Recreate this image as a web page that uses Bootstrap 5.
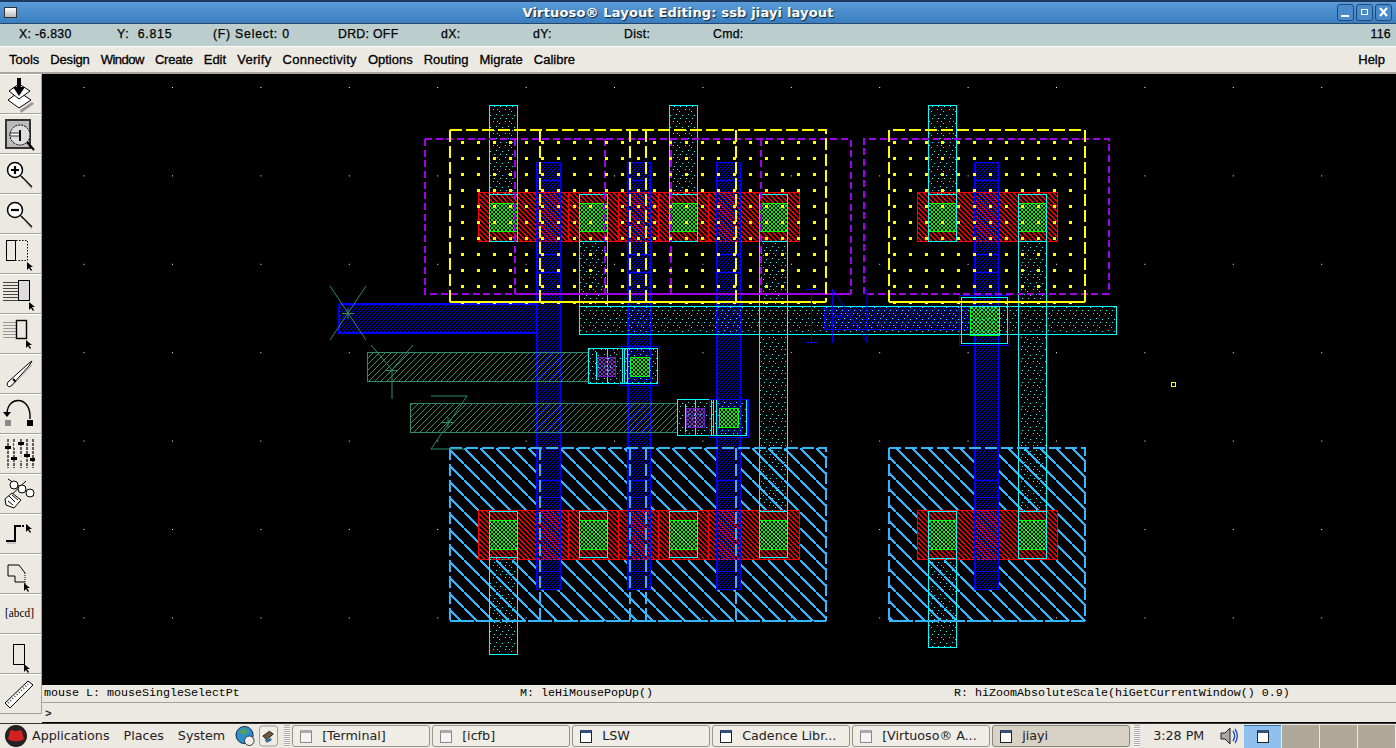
<!DOCTYPE html>
<html lang="en"><head><meta charset="utf-8"><title>Virtuoso Layout Editing</title>
<link href="https://cdn.jsdelivr.net/npm/bootstrap@5.3.0/dist/css/bootstrap.min.css" rel="stylesheet">
<style>
html,body{height:748px;overflow:hidden;background:#ece9e2;margin:0}
.app-win{height:748px}
.titlebar{height:24px;background:linear-gradient(#5a9ad8,#3b7ebf);border-top:2px solid #1c3a5e;border-bottom:1px solid #25496f;color:#fff;font:700 13px/20px "DejaVu Sans",sans-serif;text-shadow:1px 1px 1px #123;letter-spacing:.15px;padding:0 4px}
.titlebar .ttl{left:0;right:40px;text-align:center}
.win-ico{width:13px;height:11px;background:linear-gradient(#fff,#bbb);border:1px solid #333}
.win-btns{gap:2px}
.win-btn{width:17px;height:17px;border:1px solid #1f4a78;border-radius:3px;background:#4a8ccb}
.infobar{height:22px;background:#bccdcd;display:grid;grid-template-columns:98px 96px 125px 103px 92px 91px 89px 1fr auto;padding:0 5px 0 19px;font:12.3px/21px "Liberation Sans",sans-serif;color:#000;-webkit-text-stroke:.25px #000;letter-spacing:.3px}
.wide-sp{letter-spacing:.75px}
.menubar{height:28px;background:#ece9e2;border-top:1px solid #fff;border-bottom:2px solid #aaa69e;padding:0 11px 0 9px;font:13px/25px "Liberation Sans",sans-serif;color:#000;-webkit-text-stroke:.3px #000;gap:11px}
.tight-a{letter-spacing:-.2px}.tight-b{letter-spacing:-.5px}.loose-a{letter-spacing:.3px}
.main-row{height:649px}
.toolcol{width:42px;flex:none}
.toolbtn{height:40px;width:42px;background:#ece9e2;border-top:1px solid #fff;border-bottom:1px solid #a5a29a;border-right:1px solid #a5a29a}
.toolbtn svg{display:block}
.toolbtn text{font:12px "Liberation Serif",serif;fill:#000}
.canvas-wrap{height:611px;background:#000}
.canvas-wrap svg{display:block}
.statusln{height:18px;font:11.67px/17px "Liberation Mono",monospace;color:#000;border-bottom:1px solid #a5a29a;padding-left:2px;background:#ece9e2;white-space:pre}
.stat-a{width:476px}.stat-b{width:434px}
.promptln{height:20px;font:700 11px/22px "Liberation Mono",monospace;padding-left:3px;background:#ece9e2;border-bottom:1px solid #000}
.taskbar{height:25px;background:#ece9e2;border-top:1px solid #333;font:12.7px/24px "DejaVu Sans",sans-serif;color:#222;white-space:nowrap}
.mnu-gap{margin-left:14px}
.ico-globe{margin-left:10px}
.ico-tool{margin-left:3px}
.grip{width:6px;height:22px;flex:none;background:repeating-linear-gradient(#aaa 0 1px,#f8f8f8 1px 2px)}
.grip-a{margin:0 2px 0 6px}
.grip-b{margin-left:2px}
.taskbtn{width:138px;height:22px;border:1px solid #9a968c;border-radius:3px;background:#f0ede6;line-height:20px;padding-left:7px;gap:10px;overflow:hidden;margin-right:2px;flex:none}
.taskbtn.actv{background:#d8d1c6;border-color:#8a857b}
.winglyph{width:12px;height:13px;border:1px solid #222;background:#fff;border-top:3px solid #33507a;flex:none}
.winglyph.dim{border-color:#888;border-top-color:#aaa;background:#f4f4f4}
.clock-t{margin-left:13px;flex:none}
.ico-spk{margin-left:15px;flex:none}
.wsps{margin-left:5px;flex:none}
.wsp{width:37px;height:23px;background:#b0a898;margin-right:1px;flex:none}
.wsp.on{background:#8fc1ef;border-top:1px solid #3a70a8}
</style></head>
<body>
<div class="app-win d-flex flex-column">
<div class="titlebar position-relative d-flex align-items-center justify-content-between">
 <span class="win-ico"></span>
 <span class="ttl position-absolute">Virtuoso® Layout Editing: ssb jiayi layout</span>
 <span class="d-flex win-btns">
  <svg class="win-btn" viewBox="0 0 15 15"><rect x="3" y="10" width="8" height="2" fill="#fff"/></svg>
  <svg class="win-btn" viewBox="0 0 15 15"><rect x="4.500" y="4.500" width="6" height="5" fill="none" stroke="#fff"/></svg>
  <svg class="win-btn" viewBox="0 0 15 15"><path d="M4 3l7 8M11 3l-7 8" stroke="#fff" stroke-width="2"/></svg>
 </span>
</div>
<div class="infobar"><span>X: -6.830</span><span class="wide-sp">Y:&nbsp; 6.815</span><span class="wide-sp">(F) Select: 0</span><span>DRD: OFF</span><span>dX:</span><span>dY:</span><span>Dist:</span><span>Cmd:</span><span>116</span></div>
<div class="menubar d-flex"><span>Tools</span><span class="tight-a">Design</span><span class="tight-b">Window</span><span class="tight-a">Create</span><span>Edit</span><span class="loose-a">Verify</span><span class="loose-a">Connectivity</span><span>Options</span><span>Routing</span><span>Migrate</span><span>Calibre</span><span class="ms-auto">Help</span></div>
<div class="main-row d-flex">
 <div class="toolcol">
  <div class="toolbtn"><svg width="40" height="38" viewBox="0 0 40 38"><path d="M20 35l12-8 2 2-13 9z" fill="#999"/><path d="M8 25l11-8 12 8-12 8z" fill="#fff" stroke="#000"/><path d="M9 16l10-7 11 7-11 8z" fill="#fff" stroke="#000"/><path d="M17 3h4v9h4l-6 9-6-9h4z" fill="#000"/></svg></div>
  <div class="toolbtn"><svg width="40" height="38" viewBox="0 0 40 38"><rect x="6" y="5" width="24" height="28" fill="#bbb" stroke="#333" stroke-width="2"/><circle cx="20" cy="20" r="10" fill="#ddd" stroke="#000" stroke-dasharray="2 1"/><path d="M10 18h10v3h-10z" fill="#fff" stroke="#333"/><path d="M20 15v11" stroke="#000" stroke-width="2"/><path d="M27 27l7 8" stroke="#000" stroke-width="2"/></svg></div>
  <div class="toolbtn"><svg width="40" height="38" viewBox="0 0 40 38"><circle cx="15" cy="15" r="7.500" fill="#fff" stroke="#000" stroke-width="1.500"/><path d="M11 15h8M15 11v8" stroke="#000" stroke-width="2.200"/><path d="M21 21l11 11" stroke="#000" stroke-width="1.500"/><path d="M23 24l9 10" stroke="#aaa"/></svg></div>
  <div class="toolbtn"><svg width="40" height="38" viewBox="0 0 40 38"><circle cx="15" cy="15" r="7.500" fill="#fff" stroke="#000" stroke-width="1.500"/><path d="M11 15h8" stroke="#000" stroke-width="2.200"/><path d="M21 21l11 11" stroke="#000" stroke-width="1.500"/><path d="M23 24l9 10" stroke="#aaa"/></svg></div>
  <div class="toolbtn"><svg width="40" height="38" viewBox="0 0 40 38"><path d="M16 5.500h11.500v20h-11" fill="none" stroke="#000" stroke-dasharray="1.500 1.500"/><rect x="6.500" y="5.500" width="9" height="20" fill="#ece9e2" stroke="#000"/><use href="#curs" x="27" y="27"/></svg></div>
  <div class="toolbtn"><svg width="40" height="38" viewBox="0 0 40 38"><path d="M3 7.500h15M3 10.500h15M3 13.500h15M3 16.500h15M3 19.500h15M3 22.500h15M3 25.500h15" stroke="#444"/><rect x="18.500" y="5.500" width="11" height="20" fill="#ddd" stroke="#000"/><use href="#curs" x="29" y="27"/></svg></div>
  <div class="toolbtn"><svg width="40" height="38" viewBox="0 0 40 38"><path d="M3 7.500h13M3 10.500h13M3 13.500h13M3 16.500h13M3 19.500h13M3 22.500h13" stroke="#999"/><rect x="16.500" y="5.500" width="10" height="18" fill="#ece9e2" stroke="#000" stroke-width="1.400"/><use href="#curs" x="26" y="25"/></svg></div>
  <div class="toolbtn"><svg width="40" height="38" viewBox="0 0 40 38"><path d="M8 27L28 9l4-3-3 5-18 20c-3 2-5-1-3-4z" fill="#fff" stroke="#000"/><path d="M13 24l3 3" stroke="#000" stroke-width="2"/><path d="M12 31l20-21" stroke="#aaa"/></svg></div>
  <div class="toolbtn"><svg width="40" height="38" viewBox="0 0 40 38"><path d="M7 18C8 1 29 1 30 20v4" fill="none" stroke="#000" stroke-width="1.400"/><path d="M3 17l4 5 4-5" fill="#000"/><rect x="5" y="25" width="6" height="6" fill="#888"/><rect x="27" y="25" width="6" height="6" fill="#000"/></svg></div>
  <div class="toolbtn"><svg width="40" height="38" viewBox="0 0 40 38"><path d="M8 4v29M14 4v29M21 4v29M27 4v29M33 4v29" stroke="#333" stroke-width="1.500" stroke-dasharray="3 1"/><path d="M5 11h6v3h-6zM11 22h6v3h-6zM18 7h6v3h-6zM24 19h6v3h-6zM30 23h5v3h-5z" fill="#000"/><path d="M11 14v8M24 10v9M15 7v6M21 19v7" stroke="#fff" stroke-width="1.500"/></svg></div>
  <div class="toolbtn"><svg width="40" height="38" viewBox="0 0 40 38"><path d="M8 4l26 17M5 26L26 6" stroke="#000"/><circle cx="14" cy="10" r="4" fill="#fff" stroke="#000"/><circle cx="22" cy="14" r="4" fill="#fff" stroke="#000"/><circle cx="30" cy="18" r="4" fill="#fff" stroke="#000"/><path d="M5 24l7-6 9 7-7 8-8-3z" fill="#fff" stroke="#000"/><path d="M9 21l6 6M12 20l6 5M8 26l5 4" stroke="#000"/></svg></div>
  <div class="toolbtn"><svg width="40" height="38" viewBox="0 0 40 38"><path d="M6 26h9V11h6" fill="none" stroke="#000" stroke-width="2"/><path d="M7 28h9" stroke="#aaa"/><path d="M22 11h6" stroke="#000" stroke-width="2" stroke-dasharray="2 2"/><use href="#curs" x="26" y="9"/></svg></div>
  <div class="toolbtn"><svg width="40" height="38" viewBox="0 0 40 38"><path d="M25 18v11" stroke="#000" stroke-dasharray="1 1"/><path d="M25 18l-6-8H8v11h7v6h10" fill="none" stroke="#000"/><use href="#curs" x="24" y="28"/></svg></div>
  <div class="toolbtn"><svg width="40" height="38" viewBox="0 0 40 38"><text x="5" y="22" textLength="29" lengthAdjust="spacingAndGlyphs">[abcd]</text></svg></div>
  <div class="toolbtn"><svg width="40" height="38" viewBox="0 0 40 38"><rect x="13.500" y="9.500" width="11" height="20" fill="#ece9e2" stroke="#000"/><use href="#curs" x="24" y="29"/></svg></div>
  <div class="toolbtn"><svg width="40" height="38" viewBox="0 0 40 38"><path d="M5 28L28 6l5 4-23 23z" fill="#fff" stroke="#000"/><path d="M8 28l20-19" stroke="#555" stroke-dasharray="1 2" stroke-width="2"/></svg></div>
 </div>
 <div class="flex-grow-1 d-flex flex-column">
  <div class="canvas-wrap">
<svg width="1354" height="611" viewBox="42 74 1354 611" shape-rendering="crispEdges">
<defs>
 <symbol id="curs" overflow="visible"><path d="M0 0v8l2-2 2 3 1-1-2-3h3z" fill="#000"/></symbol>
 <pattern id="gd" patternUnits="userSpaceOnUse" x="83.600" y="87" width="88.400" height="88.400"><rect width="1" height="1" fill="#fff"/></pattern>
 <pattern id="rh" patternUnits="userSpaceOnUse" width="5" height="5"><path d="M0 0h2v1h-2zM1 1h2v1h-2zM2 2h2v1h-2zM3 3h2v1h-2zM4 4h1v1h-1zM0 4h1v1h-1z" fill="#f00000"/></pattern>
 <pattern id="bh" patternUnits="userSpaceOnUse" width="4" height="4"><path d="M3 0h1v1h-1zM2 1h1v1h-1zM1 2h1v1h-1zM0 3h1v1h-1z" fill="#0000ff"/></pattern>
 <pattern id="th" patternUnits="userSpaceOnUse" width="6" height="6"><path d="M5 0h1v1h-1zM4 1h1v1h-1zM3 2h1v1h-1zM2 3h1v1h-1zM1 4h1v1h-1zM0 5h1v1h-1z" fill="#2e8b6e"/></pattern>
 <pattern id="lh" patternUnits="userSpaceOnUse" width="16" height="16"><path d="M-1 -1L17 17" stroke="#33b5ff" stroke-width="1.500"/></pattern>
 <pattern id="lg" patternUnits="userSpaceOnUse" width="16" height="16"><path d="M-1 -1L17 17" stroke="#66dd88" stroke-width="1"/></pattern>
 <pattern id="cd" patternUnits="userSpaceOnUse" width="12" height="12"><path d="M1 1h1v1h-1zM7 3h1v1h-1zM4 6h1v1h-1zM10 7h1v1h-1zM2 10h1v1h-1zM8 10h1v1h-1zM5 1h1v1h-1z" fill="#0ff"/></pattern>
 <pattern id="gc" patternUnits="userSpaceOnUse" width="4" height="4"><path d="M0 0h1v1h-1zM1 1h1v1h-1zM2 2h1v1h-1zM3 3h1v1h-1zM3 0h1v1h-1zM2 1h1v1h-1zM1 2h1v1h-1zM0 3h1v1h-1z" fill="#00f000"/></pattern>
 <pattern id="pc" patternUnits="userSpaceOnUse" width="4" height="4"><path d="M0 0h1v1h-1zM1 1h1v1h-1zM2 2h1v1h-1zM3 3h1v1h-1zM3 0h1v1h-1zM2 1h1v1h-1zM1 2h1v1h-1zM0 3h1v1h-1z" fill="#7a2fc0"/></pattern>
 <pattern id="yd" patternUnits="userSpaceOnUse" x="5" y="5" width="16" height="16"><rect x="8" y="8" width="3" height="3" fill="#ff0"/></pattern>
</defs>
<rect x="42" y="74" width="1354" height="611" fill="url(#gd)"/>
<g fill="url(#lh)"><rect x="450" y="448" width="376" height="173"/><rect x="889" y="448" width="196" height="173"/></g>
<g fill="#000"><rect x="537" y="448" width="24" height="142"/><rect x="628" y="448" width="23" height="142"/><rect x="717" y="448" width="24" height="142"/><rect x="975" y="448" width="24" height="142"/></g>
<g fill="#000"><rect x="478" y="510" width="322" height="50"/><rect x="917" y="510" width="141" height="50"/></g>
<g fill="url(#rh)"><rect x="478" y="192" width="322" height="50"/><rect x="917" y="192" width="141" height="50"/><rect x="478" y="510" width="322" height="50"/><rect x="917" y="510" width="141" height="50"/></g>
<g fill="none" stroke="#f00"><rect x="478.500" y="192.500" width="321" height="49"/><rect x="917.500" y="192.500" width="140" height="49"/><rect x="478.500" y="510.500" width="321" height="49"/><rect x="917.500" y="510.500" width="140" height="49"/>
 <path d="M568.500 192v49M618.500 192v49M658.500 192v49M708.500 192v49M568.500 510v49M618.500 510v49M658.500 510v49M708.500 510v49"/></g>
<g fill="url(#bh)">
 <rect x="537" y="162" width="24" height="428"/><rect x="628" y="162" width="23" height="428"/><rect x="717" y="162" width="24" height="428"/><rect x="975" y="162" width="24" height="428"/>
 <rect x="339" y="304" width="198" height="30"/><rect x="824" y="306" width="151" height="24"/>
</g>
<g fill="none" stroke="#0000ff" stroke-width="2">
 <path d="M537 162V590M628 162V590M717 162V590M975 162V590M339 304H537M339 333H537M339 304V334"/>
</g>
<g fill="none" stroke="#0000ff">
 <path d="M537.500 162.500h23v427h-23zM628.500 162.500h22v427h-22zM717.500 162.500h23v427h-23zM975.500 162.500h23v427h-23z"/>
 <path d="M824.500 306.500V329.500H975"/>
 <path d="M537 180.500h23M537 254.500h23M537 272.500h23M537 480.500h23M537 497.500h23M537 571.500h23M628 180.500h22M628 254.500h22M628 272.500h22M628 480.500h22M628 497.500h22M628 571.500h22M717 180.500h23M717 254.500h23M717 272.500h23M717 480.500h23M717 497.500h23M717 571.500h23M975 180.500h23M975 254.500h23M975 272.500h23M975 480.500h23M975 497.500h23M975 571.500h23"/>
</g>
<g fill="url(#th)"><rect x="367" y="352" width="222" height="30"/><rect x="410" y="403" width="268" height="30"/></g>
<path d="M589 352.500H367.500V381.500H589M678 403.500H410.500V432.500H678" fill="none" stroke="#2e8b6e"/>
<g fill="url(#cd)"><rect x="588" y="348" width="70" height="36"/><rect x="677" y="399" width="70" height="37"/></g>
<g fill="none" stroke="#0ff">
 <rect x="588.500" y="348.500" width="34" height="35"/><rect x="622.500" y="348.500" width="35" height="35"/>
 <path d="M607.500 349v34M596.500 352v28M624.500 349v34M627.500 349v34"/>
 <rect x="677.500" y="399.500" width="34" height="36"/><rect x="711.500" y="399.500" width="35" height="36"/>
 <path d="M695.500 400v35M685.500 404v28M713.500 400v35M716.500 400v35"/>
</g>
<g fill="none" stroke="#0000ff"><rect x="619.500" y="346.500" width="40" height="39"/><rect x="709.500" y="399.500" width="39" height="38"/></g>
<g fill="url(#pc)"><rect x="597" y="357" width="19" height="20"/><rect x="686" y="408" width="19" height="20"/></g>
<g fill="none" stroke="#6a1fc0"><rect x="597.500" y="357.500" width="18" height="19"/><rect x="686.500" y="408.500" width="18" height="19"/></g>
<g fill="#000">
 <rect x="489" y="203" width="29" height="29"/><rect x="579" y="203" width="29" height="29"/><rect x="669" y="203" width="29" height="29"/><rect x="759" y="203" width="29" height="29"/><rect x="928" y="203" width="29" height="29"/><rect x="1018" y="203" width="29" height="29"/>
 <rect x="489" y="520" width="29" height="30"/><rect x="579" y="520" width="29" height="30"/><rect x="669" y="520" width="29" height="30"/><rect x="759" y="520" width="29" height="30"/><rect x="928" y="520" width="29" height="30"/><rect x="1018" y="520" width="29" height="30"/>
 <rect x="970" y="306" width="30" height="30"/><rect x="630" y="357" width="20" height="20"/><rect x="719" y="408" width="20" height="20"/>
</g>
<g fill="url(#gc)">
 <rect x="489" y="203" width="29" height="29"/><rect x="579" y="203" width="29" height="29"/><rect x="669" y="203" width="29" height="29"/><rect x="759" y="203" width="29" height="29"/><rect x="928" y="203" width="29" height="29"/><rect x="1018" y="203" width="29" height="29"/>
 <rect x="489" y="520" width="29" height="30"/><rect x="579" y="520" width="29" height="30"/><rect x="669" y="520" width="29" height="30"/><rect x="759" y="520" width="29" height="30"/><rect x="928" y="520" width="29" height="30"/><rect x="1018" y="520" width="29" height="30"/>
 <rect x="970" y="306" width="30" height="30"/><rect x="630" y="357" width="20" height="20"/><rect x="719" y="408" width="20" height="20"/>
</g>
<g fill="none" stroke="#0f0">
 <path d="M489 203.500h29M489 231.500h29M579 203.500h29M579 231.500h29M669 203.500h29M669 231.500h29M759 203.500h29M759 231.500h29M928 203.500h29M928 231.500h29M1018 203.500h29M1018 231.500h29"/>
 <path d="M489 520.500h29M489 549.500h29M579 520.500h29M579 549.500h29M669 520.500h29M669 549.500h29M759 520.500h29M759 549.500h29M928 520.500h29M928 549.500h29M1018 520.500h29M1018 549.500h29"/>
 <rect x="970.500" y="306.500" width="29" height="29"/><rect x="630.500" y="357.500" width="19" height="19"/><rect x="719.500" y="408.500" width="19" height="19"/>
</g>
<g fill="url(#lg)"><rect x="490" y="521" width="28" height="28"/><rect x="580" y="521" width="28" height="28"/><rect x="670" y="521" width="28" height="28"/><rect x="760" y="521" width="28" height="28"/><rect x="929" y="521" width="28" height="28"/><rect x="1019" y="521" width="28" height="28"/></g>
<g fill="url(#cd)">
 <rect x="489" y="105" width="29" height="89"/><rect x="669" y="105" width="29" height="89"/><rect x="928" y="105" width="29" height="89"/>
 <rect x="579" y="241" width="29" height="65"/><rect x="759" y="241" width="29" height="270"/><rect x="1018" y="241" width="29" height="270"/>
 <rect x="489" y="557" width="29" height="98"/><rect x="928" y="558" width="29" height="90"/>
 <rect x="579" y="306" width="538" height="29"/>
</g>
<g fill="none" stroke="#0ff">
 <path d="M489.500 105.500h28v136h-28zM669.500 105.500h28v136h-28zM928.500 105.500h28v136h-28zM489 194.500h29M669 194.500h29M928 194.500h29"/>
 <path d="M579.500 194.500h28v47h-28zM759.500 194.500h28v47h-28zM1018.500 194.500h28v47h-28z"/>
 <path d="M579.500 241v65M607.500 241v65M759.500 241v270M787.500 241v270M1018.500 241v270M1046.500 241v270"/>
 <path d="M489.500 511.500h28v143h-28zM489 557.500h29M579.500 511.500h28v46h-28zM669.500 511.500h28v46h-28zM759.500 511.500h28v46h-28zM928.500 511.500h28v136h-28zM928 558.500h29M1018.500 511.500h28v47h-28z"/>
 <rect x="579.500" y="306.500" width="537" height="28"/>
 <path d="M999.500 306v29"/>
 <rect x="961.500" y="297.500" width="46" height="46"/>
</g>
<rect x="959.500" y="295.500" width="50" height="50" fill="none" stroke="#0000ff"/>
<g fill="none" stroke="#a000e8" stroke-width="2" stroke-dasharray="7 3.670">
 <path d="M425 139H851V294M425 139V294H515M605 139V294M515 139V294M671 139V294M761 139V294M864 294V139H1109V294H864"/>
</g>
<path d="M515 294H851" stroke="#a000e8" stroke-width="2"/>
<rect x="461" y="141" width="355" height="163" fill="url(#yd)"/>
<rect x="893" y="141" width="180" height="163" fill="url(#yd)"/>
<g fill="none" stroke="#ff0" stroke-width="2" stroke-dasharray="12 4">
 <path d="M450 130H826V302M450 130V302M540 130V302M630 130V302M646 130V302M736 130V302M889 302V130H1085V302"/>
</g>
<path d="M450 302H826M889 302H1085" stroke="#ff0" stroke-width="2"/>
<g fill="none" stroke="#33b5ff" stroke-width="2" stroke-dasharray="12 4">
 <path d="M450 448H826V621M450 448V621M540 448V621M630 448V621M646 448V621M736 448V621M889 448H1085V621M889 448V621"/>
</g>
<path d="M450 621H826M889 621H1085" stroke="#33b5ff" stroke-width="2" stroke-dasharray="24 2"/>
<g fill="none" stroke="#2e8b6e" shape-rendering="auto">
 <path d="M330 286L366 340M366 286L330 340M342 313.500h12M348 308v11"/>
 <path d="M371 345L392 370L413 345M392 370V399M385 370.500h12"/>
 <path d="M431 396H467L431 449H465M442 422.500h12M448 417v11"/>
</g>
<g fill="none" stroke="#0000f0" shape-rendering="auto">
 <path d="M806 289.500h11M811.500 289V342M806 342.500h11M832.500 289V343M832.500 289L867 342V289M835 316h11M840 311v10"/>
</g>
<rect x="1171.500" y="382.500" width="4" height="4" fill="none" stroke="#ff0"/>
</svg>
  </div>
  <div class="statusln d-flex"><span class="stat-a">mouse L: mouseSingleSelectPt</span><span class="stat-b">M: leHiMousePopUp()</span><span>R: hiZoomAbsoluteScale(hiGetCurrentWindow() 0.9)</span></div>
  <div class="promptln">&gt;</div>
 </div>
</div>
<div class="taskbar d-flex align-items-center">
 <svg class="ms-1 flex-shrink-0" width="24" height="24" viewBox="0 0 24 24"><circle cx="12" cy="12" r="11" fill="#222"/><path d="M4 15c3 3 13 3 16 0l-2-8c-2-2-3 0-6 0S8 5 6 7z" fill="#d02020"/></svg>
 <span class="ms-1">Applications</span><span class="mnu-gap">Places</span><span class="mnu-gap">System</span>
 <svg class="ico-globe flex-shrink-0" width="21" height="22" viewBox="0 0 22 22"><circle cx="10" cy="10" r="9" fill="#2c8fc8" stroke="#124"/><path d="M4 6l6-3 3 4-4 3zM12 13l5-1-2 5z" fill="#5aa050"/><ellipse cx="15" cy="16" rx="5" ry="5" fill="#eee" stroke="#333"/></svg>
 <svg class="ico-tool flex-shrink-0" width="19" height="24" viewBox="0 0 20 24"><rect x=".5" y="1.500" width="19" height="21" rx="3" fill="#f0ede6" stroke="#999"/><path d="M4 12l7-5 4 3-7 6z" fill="#6a5a3a" stroke="#222"/><path d="M6 16l7-2v3l-5 2z" fill="#3a6a9a"/></svg>
 <span class="grip grip-a"></span>
 <div class="d-flex align-items-center flex-shrink-0">
  <div class="taskbtn d-flex"><span class="winglyph dim align-self-center"></span><span>[Terminal]</span></div>
  <div class="taskbtn d-flex"><span class="winglyph dim align-self-center"></span><span>[icfb]</span></div>
  <div class="taskbtn d-flex"><span class="winglyph align-self-center"></span><span>LSW</span></div>
  <div class="taskbtn d-flex"><span class="winglyph align-self-center"></span><span>Cadence Libr...</span></div>
  <div class="taskbtn d-flex"><span class="winglyph dim align-self-center"></span><span>[Virtuoso® A...</span></div>
  <div class="taskbtn actv d-flex"><span class="winglyph align-self-center"></span><span>jiayi</span></div>
 </div>
 <span class="grip grip-b"></span>
 <span class="clock-t">3:28 PM</span>
 <svg class="ico-spk" width="20" height="22" viewBox="0 0 20 22"><path d="M2 8h4l5-5v16l-5-5H2z" fill="#aaa" stroke="#222"/><path d="M14 6c2 3 2 7 0 10M16 4c3 4 3 10 0 14" fill="none" stroke="#2050b0" stroke-width="1.400"/></svg>
 <div class="d-flex wsps">
  <div class="wsp on d-flex align-items-center justify-content-center"><span class="winglyph"></span></div><div class="wsp"></div><div class="wsp"></div><div class="wsp"></div>
 </div>
</div>
</div>
</body></html>
